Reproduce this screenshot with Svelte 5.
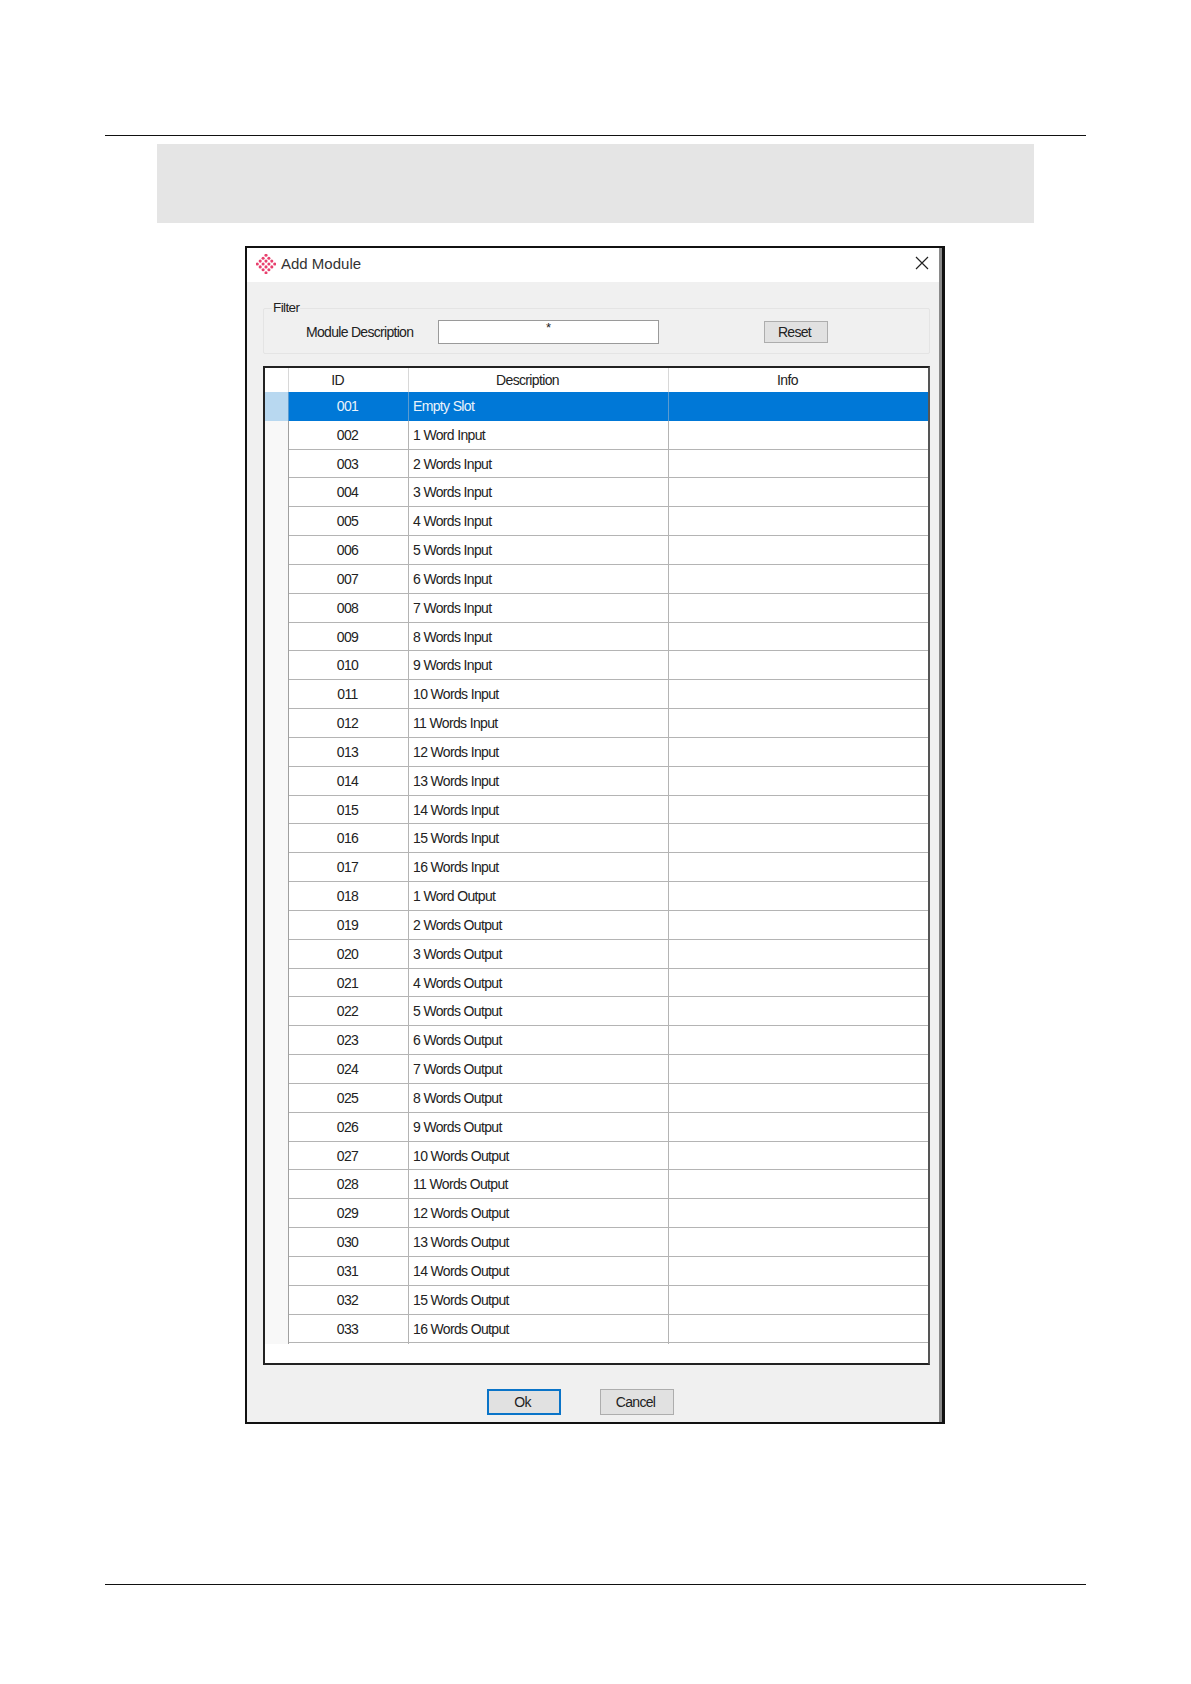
<script lang="ts">
  // Rows of the module table: empty slot, then 16 input and 16 output sizes
  function sizeLabel(n: number, dir: string): string {
    return `${n} ${n === 1 ? 'Word' : 'Words'} ${dir}`;
  }

  const labels = ['Empty Slot'];
  for (let n = 1; n <= 16; n++) labels.push(sizeLabel(n, 'Input'));
  for (let n = 1; n <= 16; n++) labels.push(sizeLabel(n, 'Output'));

  const rows = labels.map((label, i) => ({
    id: String(i + 1).padStart(3, '0'),
    label
  }));

  // Logo is a diamond lattice of small dots
  const dots: { x: number; y: number }[] = [];
  for (let a = 0; a < 4; a++) {
    for (let b = 0; b < 4; b++) {
      dots.push({ x: 10 + (a - b) * 2.9, y: 10 + (a + b - 3) * 2.9 });
    }
  }
</script>

<div class="page">
  <div class="rule top"></div>
  <div class="band"></div>

  <div class="dialog">
    <div class="titlebar">
      <svg class="logo" viewBox="0 0 20 20" width="20" height="20" aria-hidden="true">
        {#each dots as d}
          <circle cx={d.x} cy={d.y} r="1.55" fill="#e8406e" />
        {/each}
      </svg>
      <span class="title">Add Module</span>
      <svg class="close" viewBox="0 0 14 14" width="14" height="14" aria-hidden="true">
        <path d="M1 1 L13 13 M13 1 L1 13" stroke="#222" stroke-width="1.2" fill="none" />
      </svg>
    </div>

    <div class="body">
      <fieldset class="filter">
        <legend>Filter</legend>
        <span class="filter-label">Module Description</span>
        <div class="input">*</div>
        <button class="btn reset">Reset</button>
      </fieldset>

      <div class="table">
        <div class="row head">
          <div class="cell gutter"></div>
          <div class="cell center">ID</div>
          <div class="cell center">Description</div>
          <div class="cell center">Info</div>
        </div>
        {#each rows as row, i}
          <div class="row item" class:selected={i === 0}>
            <div class="cell gutter"></div>
            <div class="cell id">{row.id}</div>
            <div class="cell desc">{row.label}</div>
            <div class="cell"></div>
          </div>
        {/each}
      </div>

      <div class="actions">
        <button class="btn ok">Ok</button>
        <button class="btn">Cancel</button>
      </div>
    </div>
  </div>

  <div class="rule bottom"></div>
</div>

<style>
  :global(body) {
    margin: 0;
    background: #fff;
  }

  .page {
    height: 1684px;
    padding-top: 135px;
    box-sizing: border-box;
    font-family: "Liberation Sans", Arial, sans-serif;
    color: #222;
  }

  .rule {
    height: 1px;
    margin: 0 105px;
    background: #111;
  }

  .rule.bottom {
    margin-top: 160px;
  }

  .band {
    height: 79px;
    margin: 8px 157px 0;
    background: #e5e5e5;
  }

  .dialog {
    width: 700px;
    height: 1178px;
    margin: 23px 0 0 245px;
    box-sizing: border-box;
    border: 2px solid #111;
    border-right: 3px solid #111;
    background: #f0f0f0;
    box-shadow: inset -3px 0 0 #8a8a8a;
    display: flex;
    flex-direction: column;
  }

  .titlebar {
    height: 34px;
    flex: none;
    margin-right: 3px;
    background: #fff;
    display: flex;
    align-items: center;
    padding: 0 10px 0 9px;
  }

  .logo {
    margin-top: -2px;
  }

  .title {
    margin: -3px 0 0 5px;
    font-size: 15px;
    color: #333;
  }

  .close {
    margin: -4px 0 0 auto;
  }

  .body {
    flex: 1;
    padding: 0 12px 0 16px;
  }

  .filter {
    position: relative;
    height: 46px;
    margin: 26px 0 0;
    padding: 2px 0 0;
    box-sizing: border-box;
    border: 1px solid #e4e4e4;
    border-radius: 2px;
    display: flex;
    align-items: center;
  }

  .filter legend {
    position: absolute;
    top: -9px;
    left: 8px;
    padding: 0 1px;
    background: #f0f0f0;
    font-size: 13.5px;
    letter-spacing: -0.6px;
  }

  .filter-label {
    margin-left: 42px;
    width: 132px;
    font-size: 14px;
    letter-spacing: -0.7px;
  }

  .input {
    width: 221px;
    height: 24px;
    box-sizing: border-box;
    border: 1px solid #9a9a9a;
    background: #fff;
    text-align: center;
    font-size: 13px;
    line-height: 14px;
  }

  .btn {
    width: 74px;
    height: 26px;
    padding: 0 3px 0 0;
    box-sizing: border-box;
    border: 1px solid #adadad;
    background: #e1e1e1;
    font-family: inherit;
    font-size: 14px;
    letter-spacing: -0.7px;
    color: #222;
  }

  .btn.reset {
    width: 64px;
    height: 22px;
    margin: -1px 0 0 105px;
  }

  .btn.ok {
    border: 2px solid #0a74c8;
  }

  .table {
    height: 999px;
    margin-top: 12px;
    box-sizing: border-box;
    border: 2px solid #222;
    border-right-color: #555;
    background: #fff;
    font-size: 14px;
    letter-spacing: -0.65px;
  }

  .row {
    display: grid;
    grid-template-columns: 24px 120px 260px 1fr;
  }

  .head {
    height: 24px;
    line-height: 24px;
  }

  .head .center {
    padding-right: 22px;
    text-align: center;
  }

  .item {
    height: 28.84px;
    box-sizing: border-box;
    border-bottom: 1px solid #b4b4b4;
    line-height: 29px;
  }

  .cell {
    min-width: 0;
    box-sizing: border-box;
    border-right: 1px solid #b4b4b4;
  }

  .cell:last-child {
    border-right: none;
  }

  .gutter {
    background: #f8f8f8;
    border-right-color: #a0a0a0;
  }

  .head .gutter {
    background: #fff;
  }

  .head .cell {
    border-right-color: #d8d8d8;
  }

  .id {
    padding-right: 2px;
    text-align: center;
  }

  .desc {
    padding-left: 4px;
  }

  .selected {
    background: #0078d7;
    color: #eaf3fb;
    border-bottom-color: #0078d7;
  }

  .selected .gutter {
    background: #b8d8f0;
  }

  .selected .cell {
    border-right-color: #5a9bd0;
  }

  .actions {
    display: flex;
    gap: 39px;
    margin-top: 24px;
    padding-left: 224px;
  }
</style>
